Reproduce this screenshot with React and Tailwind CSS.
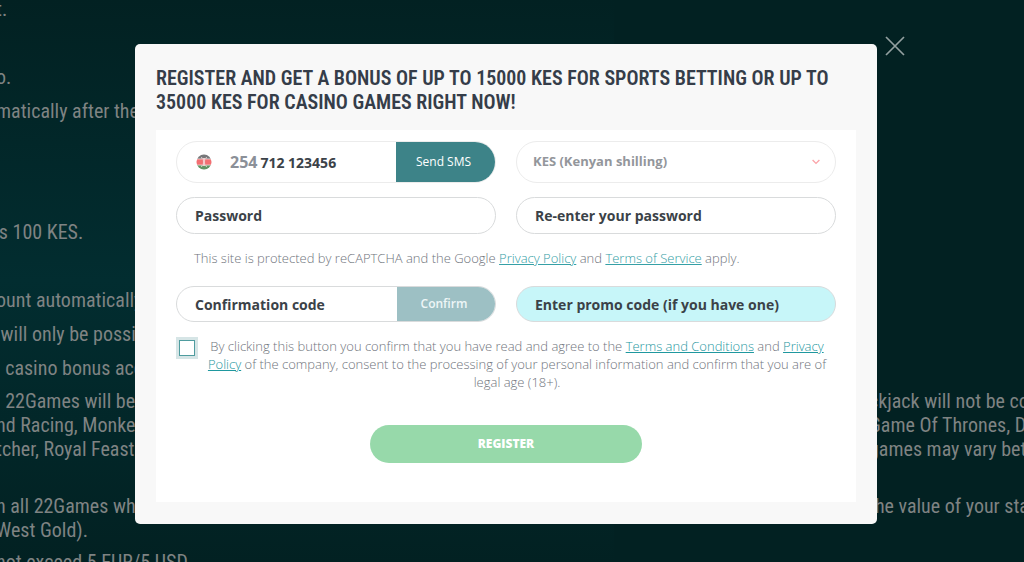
import { useState } from "react";

const termsLines = [
  { text: "t.", gap: "pt-0" },
  { text: "o.", gap: "pt-11" },
  { text: "matically after the", gap: "pt-[10px]" },
  { text: "’s 100 KES.", gap: "pt-[97px]" },
  { text: "ount automatically", gap: "pt-11" },
  { text: "\u00a0will only be possible", gap: "pt-[10px]" },
  { text: "\u00a0\u00a0casino bonus account", gap: "pt-[10px]" },
  { text: "\u00a0\u00a022Games will be", right: "ckjack will not be counted", gap: "pt-[9px]" },
  { text: "nd Racing, Monkey", right: "Game Of Thrones, Dragon", gap: "pt-0" },
  { text: "tcher, Royal Feast", right: "games may vary between", gap: "pt-0" },
  { text: "n all 22Games where", right: "the value of your stake", gap: "pt-[33px]" },
  { text: "West Gold).", gap: "pt-0" },
  { text: "not exceed 5 EUR/5 USD.", gap: "pt-2" },
];

function KenyaFlag() {
  return (
    <svg className="h-4 w-4" viewBox="0 0 16 16" aria-hidden="true">
      <defs>
        <clipPath id="flag">
          <circle cx="8" cy="8" r="7.5" />
        </clipPath>
      </defs>
      <g clipPath="url(#flag)">
        <rect width="16" height="16" fill="#f3eeee" />
        <rect width="16" height="4.6" fill="#77787a" />
        <rect y="5.3" width="16" height="5.4" fill="#f36f72" />
        <rect y="11.4" width="16" height="4.6" fill="#629564" />
        <path d="M5.4 3 10.6 13M10.6 3 5.4 13" stroke="#f7e5e5" strokeWidth="0.8" />
        <ellipse cx="8" cy="8" rx="1.8" ry="4" fill="#e8787b" />
        <path d="M8 4v8" stroke="#fff" strokeWidth="1.2" />
      </g>
    </svg>
  );
}

function TextField({ label, type = "text", className = "" }) {
  return (
    <input
      type={type}
      aria-label={label}
      placeholder={label}
      className={`w-full min-w-0 rounded-full border border-[#d9dbdc] px-[18px] text-[14px] font-bold text-[#3b4248] outline-none placeholder:text-[#3b4248] placeholder:opacity-100 ${className}`}
    />
  );
}

export default function App() {
  const [agreed, setAgreed] = useState(false);
  const [phone, setPhone] = useState("");

  return (
    <div className="relative min-h-screen overflow-hidden bg-[#022122] font-['Open_Sans',sans-serif]">
      {/* Bonus terms page behind the dialog */}
      <div className="h-screen overflow-hidden bg-linear-to-b from-[#022122] via-[#022d30] to-[#022122] bg-[length:60%_100%] bg-no-repeat">
        <div className="-mt-[3px] -ml-1 font-['Roboto_Condensed','Liberation_Sans_Narrow',sans-serif] text-[20px] leading-6 whitespace-nowrap text-[#7f8383]">
          {termsLines.map((line) => (
            <div key={line.text} className={`flex justify-between ${line.gap}`}>
              <span>{line.text}</span>
              {line.right && <span className="w-[155px] overflow-hidden">{line.right}</span>}
            </div>
          ))}
        </div>
      </div>

      <div className="absolute inset-0 flex items-start justify-center pt-11 pr-3">
        <div role="dialog" aria-labelledby="title" className="relative w-full max-w-[742px] rounded-[5px] bg-[#f8f8f8] px-[21px] py-[22px]">
          <button type="button" aria-label="Close" className="absolute top-[-8px] right-[-28px] text-[#93a0a0]">
            <svg className="h-5 w-5" viewBox="0 0 20 20" fill="none" stroke="currentColor" strokeWidth="1.7">
              <path d="M1 1 19 19M19 1 1 19" />
            </svg>
          </button>

          <h1 id="title" className="font-['Roboto_Condensed','Liberation_Sans_Narrow',sans-serif] text-[20px] leading-6 font-semibold text-[#353d49]">
            REGISTER AND GET A BONUS OF UP TO 15000 KES FOR SPORTS BETTING OR UP TO 35000 KES FOR CASINO GAMES RIGHT NOW!
          </h1>

          <form className="mt-4 bg-white px-5 pt-[11px] pb-[39px]" onSubmit={(e) => e.preventDefault()}>
            <div className="grid grid-cols-2 gap-x-5">
              <div className="flex h-[42px] items-center overflow-hidden rounded-full border border-[#ececec] pl-[19px]">
                <KenyaFlag />
                <span className="ml-[18px] text-[16px] leading-5 font-bold text-[#8b9098]">254</span>
                <input
                  type="tel"
                  aria-label="Phone number"
                  placeholder="712 123456"
                  value={phone}
                  onChange={(e) => setPhone(e.target.value)}
                  className="ml-[3px] min-w-0 flex-1 text-[14px] font-bold outline-none placeholder:text-[#3b4248] placeholder:opacity-100"
                />
                <button type="button" className="h-full w-[99px] bg-[#3d8388] pr-1 text-[12px] text-white">
                  Send SMS
                </button>
              </div>
              <div className="relative">
                <select
                  aria-label="Currency"
                  className="h-[42px] w-full appearance-none rounded-full border border-[#ececec] bg-white px-4 text-[13px] font-bold text-[#93969b] outline-none"
                >
                  <option>KES (Kenyan shilling)</option>
                </select>
                <svg className="pointer-events-none absolute top-[18px] right-4 h-[6px] w-2" viewBox="0 0 8 6" fill="none" stroke="#fba3a8" strokeWidth="1.3">
                  <path d="M.6 1 4 4.4 7.4 1" />
                </svg>
              </div>
            </div>

            <div className="mt-[14px] grid grid-cols-2 gap-x-5">
              <TextField label="Password" type="password" className="h-[37px]" />
              <TextField label="Re-enter your password" type="password" className="h-[37px]" />
            </div>

            <p className="mt-[15px] px-[18px] text-[13px] leading-[18px] font-light text-[#6f747c]">
              This site is protected by reCAPTCHA and the Google{" "}
              <a href="#privacy" className="text-[#35a0a6] underline">Privacy Policy</a> and{" "}
              <a href="#service" className="text-[#35a0a6] underline">Terms of Service</a> apply.
            </p>

            <div className="mt-[19px] grid grid-cols-2 gap-x-5">
              <div className="flex h-9 overflow-hidden rounded-full border border-[#d9dbdc]">
                <input
                  type="text"
                  aria-label="Confirmation code"
                  placeholder="Confirmation code"
                  className="min-w-0 flex-1 pl-[18px] text-[14px] font-bold outline-none placeholder:text-[#3b4248] placeholder:opacity-100"
                />
                <button type="button" className="w-[98px] bg-[#9dc0c4] pr-1 text-[12px] font-semibold text-[#eef6f7]">
                  Confirm
                </button>
              </div>
              <TextField label="Enter promo code (if you have one)" className="h-9 bg-[#c7f6f9]" />
            </div>

            <div className="mt-[15px] flex items-start">
              <input
                id="agree"
                type="checkbox"
                checked={agreed}
                onChange={(e) => setAgreed(e.target.checked)}
                className="m-[3px] h-4 w-4 shrink-0 appearance-none border border-[#4f9c9f] bg-white ring-3 ring-[#d6e5e6] checked:bg-[#4f9c9f]"
              />
              <label htmlFor="agree" className="flex-1 px-2 text-center text-[13px] leading-[18px] font-light text-[#6f747c]">
                By clicking this button you confirm that you have read and agree to the{" "}
                <a href="#terms" className="text-[#1f989f] underline">Terms and Conditions</a> and{" "}
                <a href="#privacy" className="text-[#1f989f] underline">Privacy Policy</a> of the company, consent to the
                processing of your personal information and confirm that you are of legal age (18+).
              </label>
            </div>

            <button type="submit" className="mx-auto mt-[34px] block h-[38px] w-[272px] rounded-full bg-[#97d9aa] text-[12px] font-extrabold text-white">
              REGISTER
            </button>
          </form>
        </div>
      </div>
    </div>
  );
}
